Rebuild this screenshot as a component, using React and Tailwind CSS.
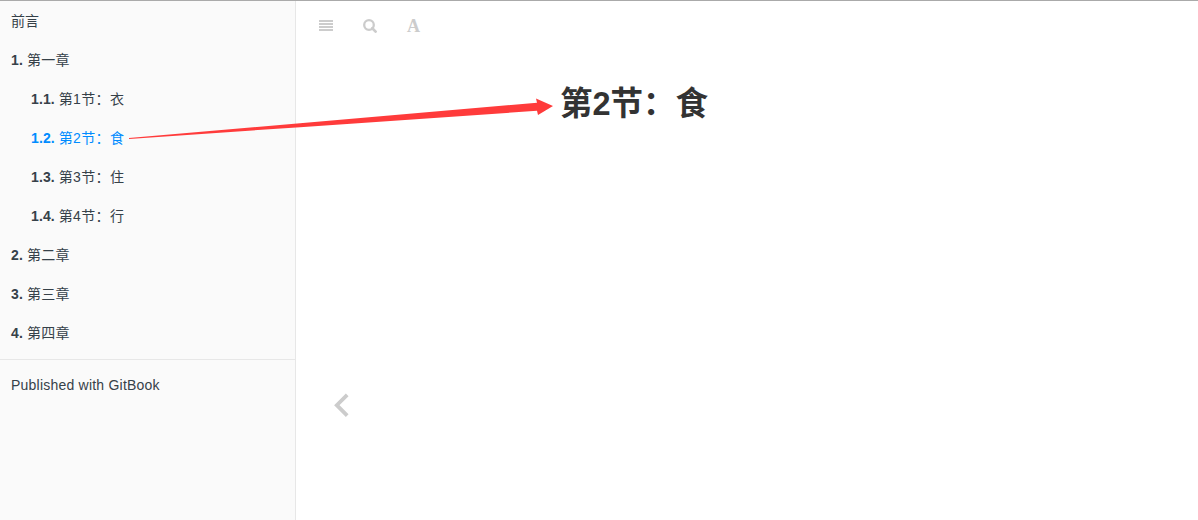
const chapters = [
  { title: '前言' },
  { level: '1.', title: '第一章' },
  { level: '1.1.', title: '第1节：衣', nested: true },
  { level: '1.2.', title: '第2节：食', nested: true, active: true },
  { level: '1.3.', title: '第3节：住', nested: true },
  { level: '1.4.', title: '第4节：行', nested: true },
  { level: '2.', title: '第二章' },
  { level: '3.', title: '第三章' },
  { level: '4.', title: '第四章' },
];

function Sidebar() {
  return (
    <nav className="w-[296px] shrink-0 border-r border-[#e7e7e7] bg-[#fafafa] text-sm text-[#364149]">
      <ul>
        {chapters.map((item) => (
          <li
            key={item.title}
            className={`flex h-[39px] items-center gap-1 ${item.nested ? 'pl-[31px]' : 'pl-[11px]'} ${
              item.active ? 'text-[#008cff]' : ''
            }`}
          >
            {item.level && <b className="tracking-[0.1px]">{item.level}</b>}
            <span className={item.level ? 'tracking-[0.35px]' : ''}>{item.title}</span>
          </li>
        ))}
      </ul>
      <div className="mt-[7px] border-t border-[#e7e7e7] pt-[15px] pl-[11px] tracking-[0.22px]">
        Published with GitBook
      </div>
    </nav>
  );
}

function Toolbar() {
  return (
    <div className="flex h-[50px] items-center pl-[23px] text-[#ccc]">
      <svg className="mr-[30px]" width="14" height="14" fill="currentColor">
        <path d="M0 1h14v2H0zM0 4h14v2H0zM0 7h14v2H0zM0 10h14v2H0z" />
      </svg>
      <svg className="mr-[30px]" width="14" height="14" fill="none" stroke="currentColor">
        <circle cx="6" cy="6" r="4.8" strokeWidth="2.3" />
        <path d="M9.3 9.3l3.3 3.3" strokeWidth="2.7" strokeLinecap="round" />
      </svg>
      <span className="font-['Liberation_Serif',serif] text-[18px] leading-[14px] font-bold">A</span>
    </div>
  );
}

export default function App() {
  return (
    <div className="relative flex h-[520px] w-[1198px] overflow-hidden border-t border-[#aaa] bg-white font-['Liberation_Sans','Noto_Sans_CJK_SC',sans-serif]">
      <Sidebar />
      <main className="flex-1">
        <Toolbar />
        <h1 className="mt-[28px] ml-[264px] text-[32.5px] leading-[50px] font-bold text-[#333]">第2节：食</h1>
      </main>
      <svg
        className="absolute top-[392px] left-[334px]"
        width="16"
        height="26"
        fill="none"
        stroke="#ccc"
        strokeWidth="3.8"
      >
        <path d="M13.2 1.8L2.8 12.2L13.2 22.6" />
      </svg>
      {/* Pointer from the active chapter to its heading */}
      <svg className="absolute top-[-1px] left-0" width="1198" height="520" fill="#ff3b3b">
        <path d="M129 138 L300 123.3 L537 102.7 L536 98.5 L553 106 L538 115 L537 110.8 L300 127.2 L129 139 Z" />
      </svg>
    </div>
  );
}
